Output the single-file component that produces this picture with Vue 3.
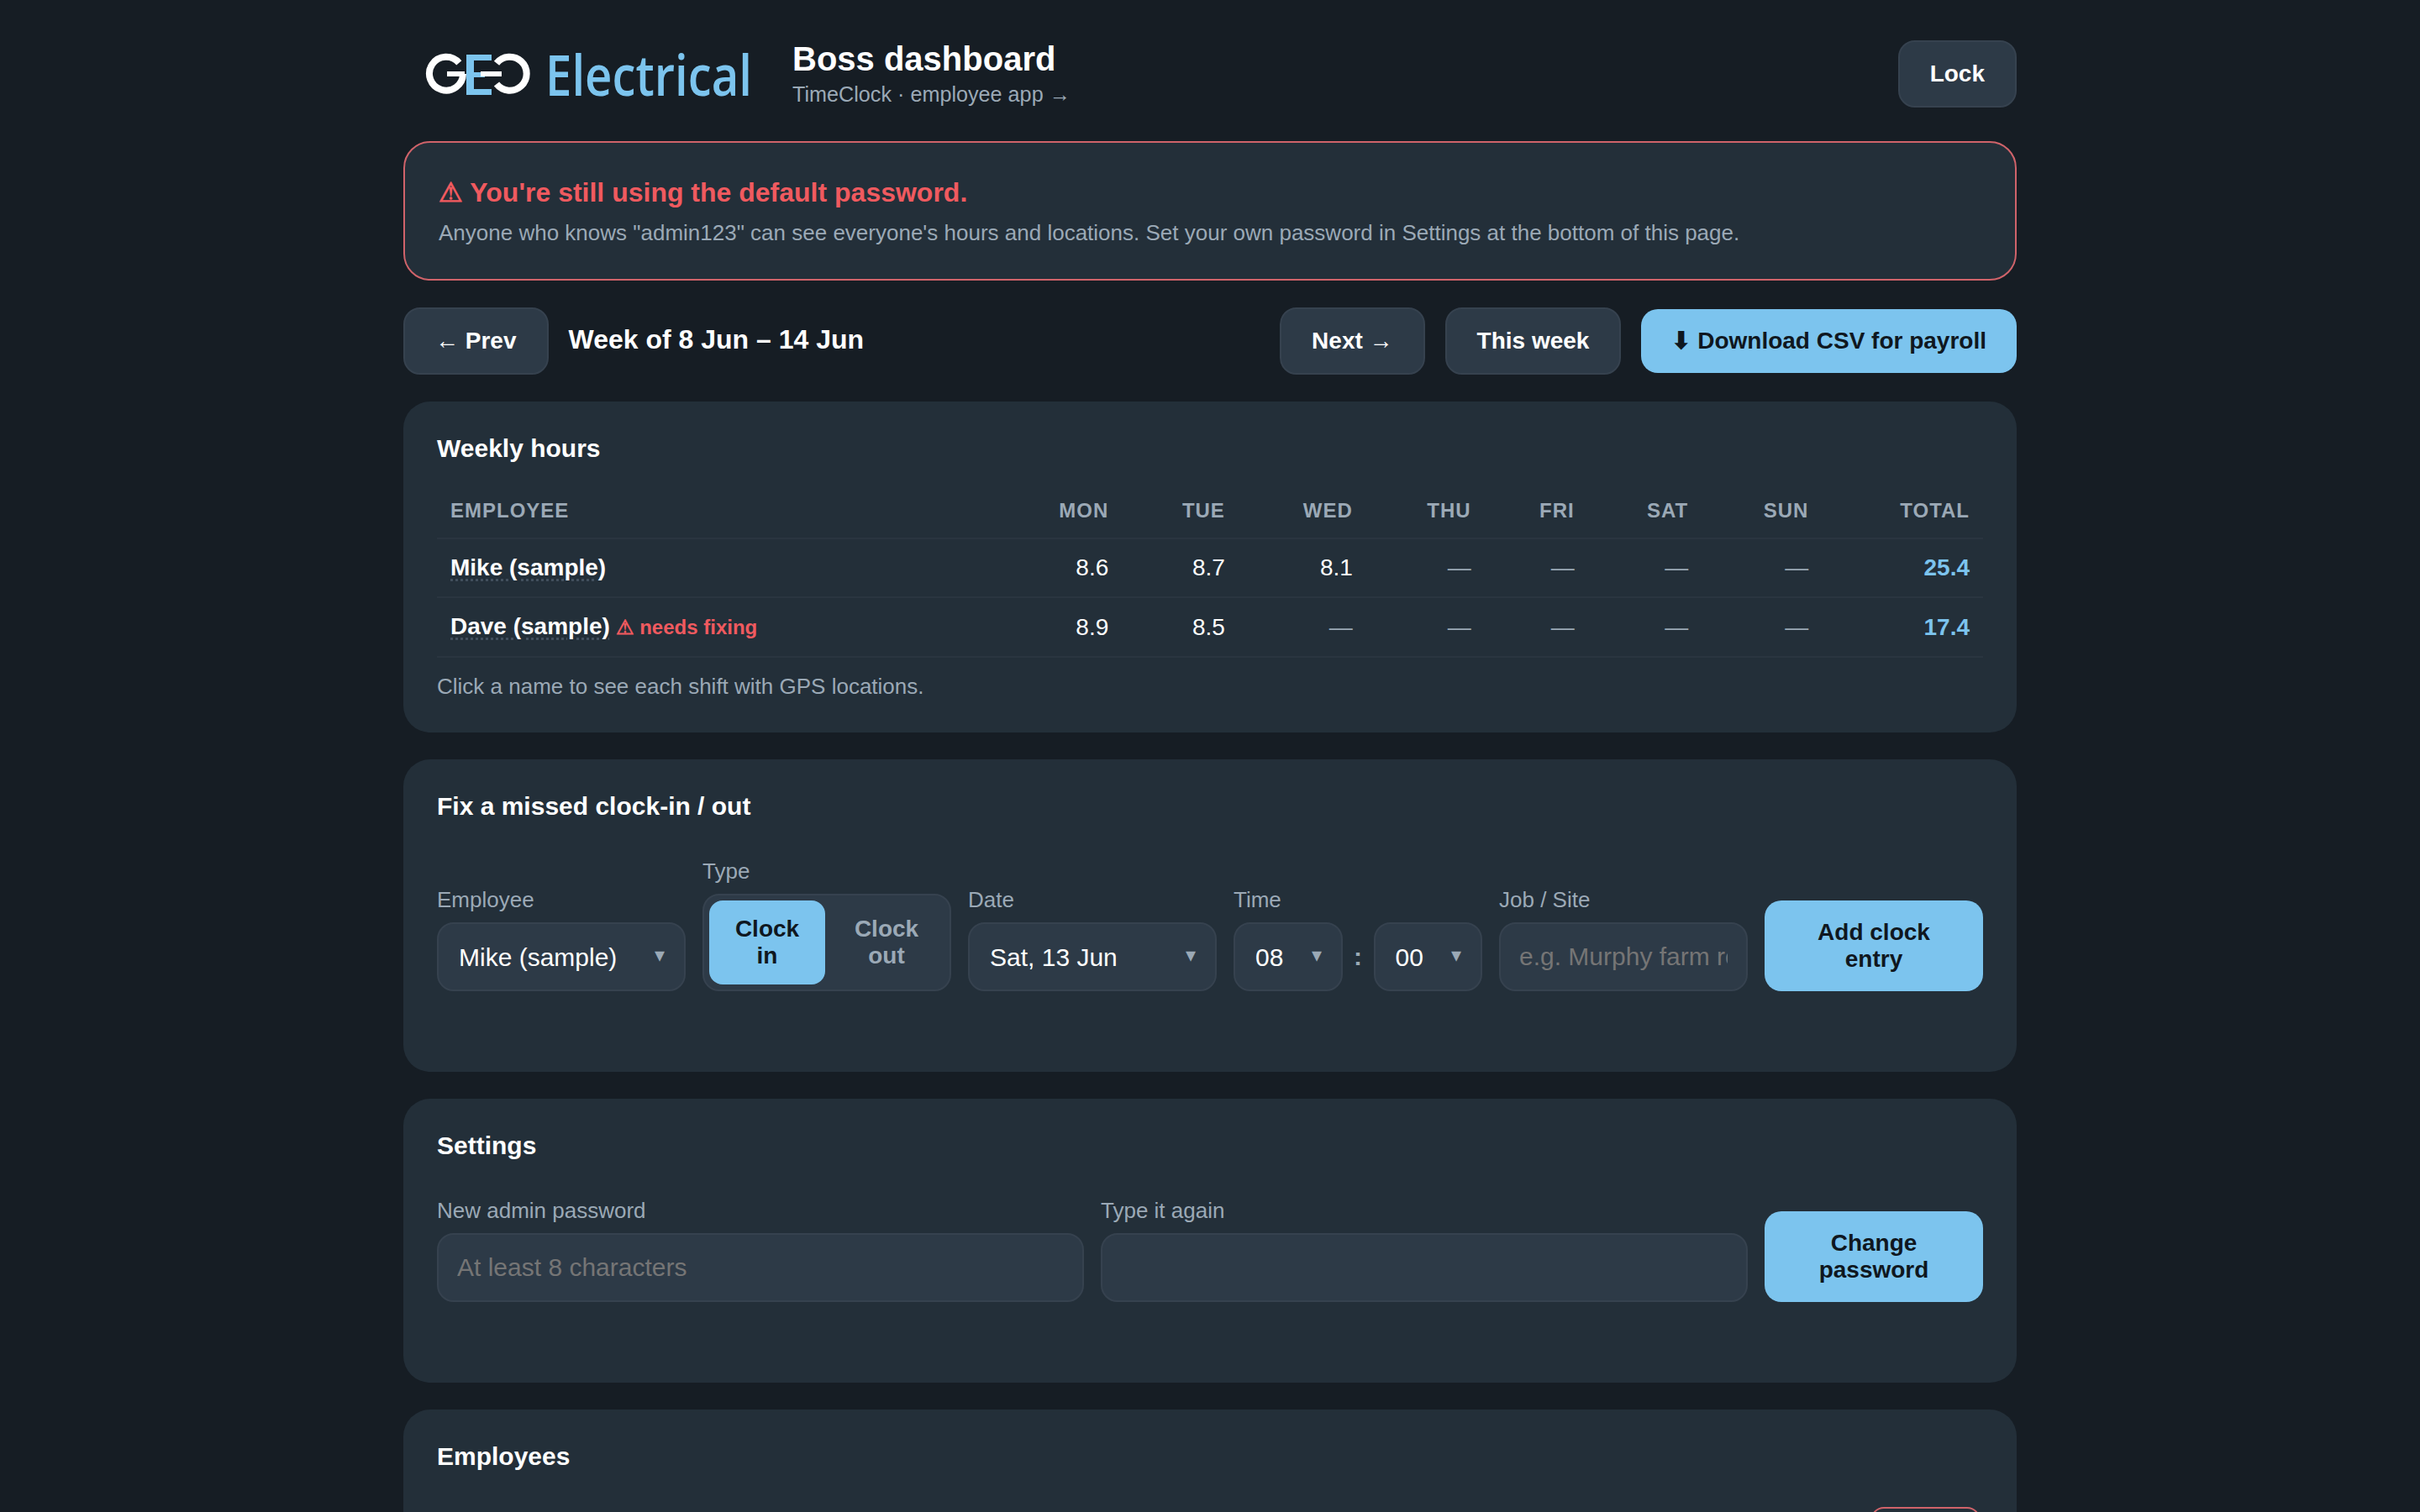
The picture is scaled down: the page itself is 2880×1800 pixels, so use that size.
<template>
  <div class="page">
    <header class="top">
      <div class="brand">
        <svg class="mark" viewBox="0 0 130 50" width="130" height="50">
          <path d="M50 2h30v7H59v14h13v6H59v14h21v7H50z" fill="#7cc4ee" />
          <path d="M41.3 11.8A20 20 0 1 0 46 25" fill="none" stroke="#fff" stroke-width="8" />
          <rect x="27" y="22" width="21" height="6" fill="#fff" />
          <rect x="67" y="22" width="25" height="6" fill="#fff" />
          <path d="M86 12.3A20 20 0 1 1 86 37.1" fill="none" stroke="#fff" stroke-width="8" />
        </svg>
        <span class="brand-name">Electrical</span>
      </div>
      <div class="heading">
        <h1>Boss dashboard</h1>
        <div class="sub">TimeClock · employee app →</div>
      </div>
      <button class="btn ghost lock">Lock</button>
    </header>

    <section class="alert">
      <div class="alert-title">⚠ You're still using the default password.</div>
      <div class="alert-text">Anyone who knows "admin123" can see everyone's hours and locations. Set your own password in Settings at the bottom of this page.</div>
    </section>

    <nav class="week-nav">
      <button class="btn ghost">← Prev</button>
      <div class="week-label">Week of 8 Jun – 14 Jun</div>
      <button class="btn ghost next">Next →</button>
      <button class="btn ghost">This week</button>
      <button class="btn primary">⬇ Download CSV for payroll</button>
    </nav>

    <section class="card">
      <h2>Weekly hours</h2>
      <table class="hours">
        <thead>
          <tr>
            <th class="name-col">Employee</th>
            <th v-for="d in days" :key="d">{{ d }}</th>
            <th>Total</th>
          </tr>
        </thead>
        <tbody>
          <tr v-for="row in rows" :key="row.name">
            <td class="name-col">
              <span class="name">{{ row.name }}</span>
              <span v-if="row.flag" class="flag"> ⚠ needs fixing</span>
            </td>
            <td v-for="(h, i) in row.hours" :key="i" :class="{ empty: h === '—' }">{{ h }}</td>
            <td class="total">{{ row.total }}</td>
          </tr>
        </tbody>
      </table>
      <p class="note">Click a name to see each shift with GPS locations.</p>
    </section>

    <section class="card">
      <h2>Fix a missed clock-in / out</h2>
      <div class="form-row">
        <label class="field">
          <span class="field-label">Employee</span>
          <span class="select-wrap">
            <select><option>Mike (sample)</option><option>Dave (sample)</option></select>
            <i class="caret">▾</i>
          </span>
        </label>
        <div class="field">
          <span class="field-label">Type</span>
          <div class="toggle">
            <button class="toggle-btn on">Clock in</button>
            <button class="toggle-btn">Clock out</button>
          </div>
        </div>
        <label class="field">
          <span class="field-label">Date</span>
          <span class="select-wrap">
            <select><option>Sat, 13 Jun</option></select>
            <i class="caret">▾</i>
          </span>
        </label>
        <div class="field">
          <span class="field-label">Time</span>
          <div class="time">
            <span class="select-wrap">
              <select><option>08</option></select>
              <i class="caret">▾</i>
            </span>
            <b class="colon">:</b>
            <span class="select-wrap">
              <select><option>00</option></select>
              <i class="caret">▾</i>
            </span>
          </div>
        </div>
        <label class="field">
          <span class="field-label">Job / Site</span>
          <input type="text" placeholder="e.g. Murphy farm road" />
        </label>
        <button class="btn primary action">Add clock entry</button>
      </div>
    </section>

    <section class="card">
      <h2>Settings</h2>
      <div class="form-row">
        <label class="field">
          <span class="field-label">New admin password</span>
          <input type="password" placeholder="At least 8 characters" />
        </label>
        <label class="field">
          <span class="field-label">Type it again</span>
          <input type="password" />
        </label>
        <button class="btn primary action">Change password</button>
      </div>
    </section>

    <section class="card">
      <h2>Employees</h2>
      <div class="emp-row">
        <button class="btn danger">Remove</button>
      </div>
    </section>
  </div>
</template>

<script setup>
const days = ['Mon', 'Tue', 'Wed', 'Thu', 'Fri', 'Sat', 'Sun']

const rows = [
  { name: 'Mike (sample)', hours: ['8.6', '8.7', '8.1', '—', '—', '—', '—'], total: '25.4' },
  { name: 'Dave (sample)', flag: true, hours: ['8.9', '8.5', '—', '—', '—', '—', '—'], total: '17.4' }
]
</script>

<style>
html, body {
  background: #161d24;
}
</style>

<style scoped>
.page {
  width: 1920px;
  margin: 0 auto;
  padding-top: 48px;
  font-family: "Liberation Sans", Arial, sans-serif;
  font-size: 28px;
  color: #fff;
}

.top {
  display: flex;
  align-items: center;
  height: 80px;
  margin-bottom: 40px;
}

.brand {
  display: flex;
  align-items: center;
  gap: 14px;
  padding-left: 25px;
  width: 463px;
  box-sizing: border-box;
}

.mark {
  flex: none;
}

.brand-name {
  display: inline-block;
  font-family: "Open Sans", sans-serif;
  font-size: 67px;
  font-weight: 600;
  line-height: 50px;
  color: #7cc4ee;
  transform: scaleX(0.84);
  transform-origin: left center;
}

.heading {
  flex: 1;
}

h1 {
  margin: 0 0 4px;
  font-size: 40px;
  line-height: 44px;
  font-weight: 700;
}

.sub {
  font-size: 25.2px;
  line-height: 32px;
  color: #9ba9b6;
}

.btn {
  font-family: inherit;
  font-size: 28px;
  font-weight: 700;
  line-height: 36px;
  border-radius: 20px;
  padding: 20px 36px;
  border: 0;
  color: #fff;
}

.ghost {
  background: #2d3a47;
  border: 2px solid #36424f;
}

.primary {
  background: #7cc4ee;
  color: #0f1720;
}

.danger {
  background: transparent;
  border: 2px solid #d0636a;
  border-radius: 16px;
  color: #f05a5f;
  font-size: 24px;
  padding: 8px 17px;
}

.alert {
  background: #232f39;
  border: 2px solid #d0636a;
  border-radius: 32px;
  padding: 37px 40px;
  height: 166px;
  box-sizing: border-box;
  margin-bottom: 32px;
}

.alert-title {
  font-size: 32px;
  line-height: 44px;
  font-weight: 700;
  color: #f05a5f;
  margin-bottom: 8px;
}

.alert-text {
  font-size: 26px;
  line-height: 36px;
  color: #9ba9b6;
}

.week-nav {
  display: flex;
  align-items: center;
  gap: 24px;
  margin-bottom: 32px;
}

.week-label {
  flex: 1;
  font-size: 32px;
  font-weight: 700;
  align-self: flex-start;
  line-height: 44px;
  padding-top: 16px;
}

.card {
  background: #232f39;
  border-radius: 32px;
  padding: 40px;
  margin-bottom: 32px;
}

h2 {
  margin: 0 0 24px;
  font-size: 30px;
  line-height: 32px;
  font-weight: 700;
}

.hours {
  width: 100%;
  margin-top: 38px;
  border-collapse: collapse;
  font-size: 28px;
}

.hours th {
  font-size: 24px;
  line-height: 28px;
  letter-spacing: 1px;
  text-transform: uppercase;
  color: #9ba9b6;
  text-align: right;
  padding: 6px 16px 18px;
  border-bottom: 2px solid #2a3540;
}

.hours td {
  text-align: right;
  padding: 18px 16px;
  line-height: 32px;
  border-bottom: 2px solid #2a3540;
}

.hours .name-col {
  text-align: left;
  font-weight: 700;
}

.name {
  text-decoration: underline dotted #445260;
  text-underline-offset: 4px;
}

.flag {
  color: #f05a5f;
  font-size: 24px;
}

.hours td.empty {
  color: #9ba9b6;
}

.hours .total {
  color: #7cc4ee;
  font-weight: 700;
}

.note {
  margin: 19px 0 0;
  font-size: 26px;
  line-height: 30px;
  color: #9ba9b6;
}

.form-row {
  display: flex;
  align-items: flex-end;
  gap: 20px;
  padding-top: 22px;
  margin-bottom: 56px;
}

.field {
  flex: 1;
  min-width: 0;
  display: flex;
  flex-direction: column;
  gap: 12px;
}

.field-label {
  font-size: 26px;
  line-height: 30px;
  color: #9ba9b6;
}

select,
input {
  display: block;
  width: 100%;
  height: 82px;
  box-sizing: border-box;
  appearance: none;
  background: #2d3a47;
  border: 2px solid #36424f;
  border-radius: 20px;
  padding: 0 24px;
  font-family: inherit;
  font-size: 30px;
  color: #fff;
  outline: none;
}

input {
  padding: 0 22px;
}

.select-wrap {
  position: relative;
  display: block;
  flex: 1;
  min-width: 0;
}

.caret {
  position: absolute;
  right: 25px;
  top: 25px;
  font-style: normal;
  font-size: 24px;
  color: #9ba9b6;
  pointer-events: none;
}

.time {
  display: flex;
  align-items: center;
  gap: 12px;
}

.colon {
  width: 13px;
  font-size: 30px;
  text-align: center;
  color: #9ba9b6;
}

.toggle {
  display: flex;
  gap: 4px;
  background: #2d3a47;
  border: 2px solid #36424f;
  border-radius: 20px;
  padding: 6px;
}

.toggle-btn {
  flex: 1;
  min-width: 0;
  height: 100px;
  font-family: inherit;
  font-size: 28px;
  font-weight: 700;
  line-height: 32px;
  background: transparent;
  border: 0;
  border-radius: 16px;
  color: #9ba9b6;
  padding: 0 20px;
}

.toggle-btn.on {
  background: #7cc4ee;
  color: #0f1720;
}

.action {
  flex: none;
  width: 260px;
  height: 108px;
  padding: 0 32px;
  line-height: 32px;
}

.emp-row {
  display: flex;
  justify-content: flex-end;
  padding: 20px 3px 0 0;
}
</style>
